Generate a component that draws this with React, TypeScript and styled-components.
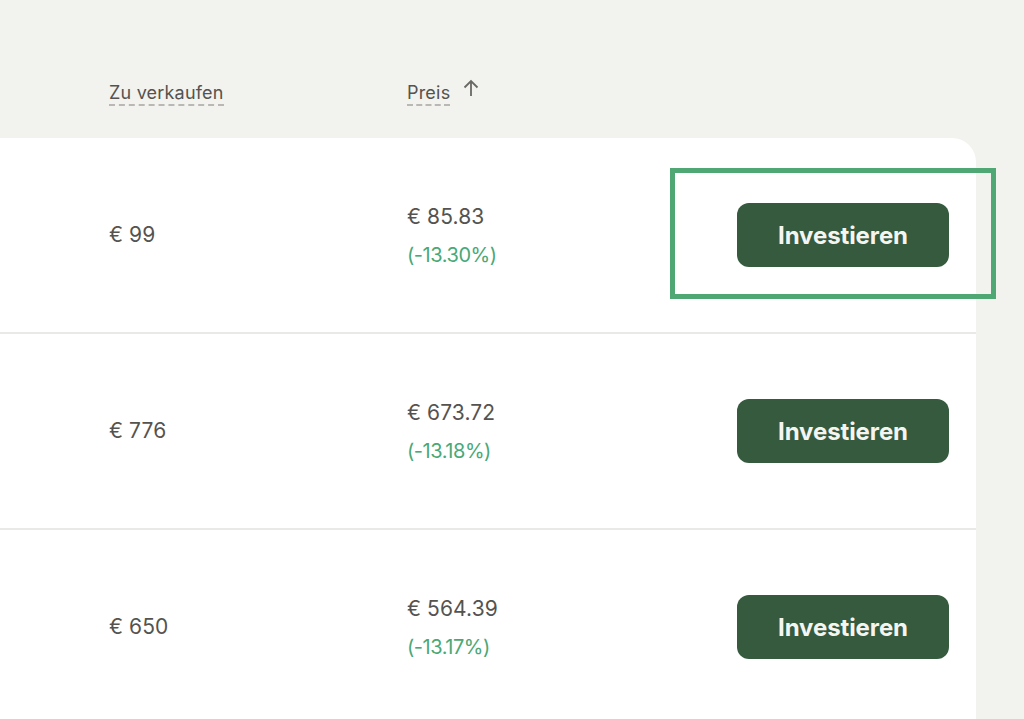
import React from 'react';
import styled, { createGlobalStyle } from 'styled-components';

const GlobalStyle = createGlobalStyle`
    html, body {
        margin: 0;
        padding: 0;
        height: 100%;
        overflow: hidden;
        background: #f2f2ee;
        font-family: Inter, "Liberation Sans", sans-serif;
    }
`;

const Page = styled.div`
    position: relative;
    width: 1024px;
    height: 719px;
    overflow: hidden;
    background: #f2f2ee;
`;

const Columns = styled.div`
    display: grid;
    grid-template-columns: 298px 1fr;
    padding-left: 109px;
`;

const Header = styled(Columns)`
    height: 138px;
    width: 976px;
    box-sizing: border-box;
    align-items: start;
    padding-top: 81px;
`;

const HeaderCell = styled.div`
    display: flex;
    align-items: flex-start;
    gap: 11px;
`;

const HeaderLabel = styled.span`
    font-size: 18px;
    line-height: 23px;
    color: #55534f;
    letter-spacing: 0.2px;
    border-bottom: 2px dashed #b9b8b4;
`;

const SortIcon = styled.svg`
    width: 20px;
    height: 20px;
    margin-top: -3px;
    fill: none;
    stroke: #6a6864;
    stroke-width: 1.8;
`;

const Card = styled.div`
    width: 976px;
    background: #ffffff;
    border-top-right-radius: 24px;
`;

const Row = styled(Columns)`
    height: 196px;
    box-sizing: border-box;
    align-items: center;
    padding-right: 27px;
    grid-template-columns: 298px 1fr auto;
    border-bottom: 2px solid #e9e9e6;
`;

const Amount = styled.div`
    font-size: 21px;
    line-height: 26px;
    color: #55534f;
    letter-spacing: 0.1px;
`;

const PriceCell = styled.div`
    display: flex;
    flex-direction: column;
    gap: 12px;
    padding-top: 1px;
`;

const Discount = styled.div`
    font-size: 20px;
    line-height: 26px;
    color: #4aa876;
    letter-spacing: -0.45px;
`;

const InvestButton = styled.button`
    width: 212px;
    height: 64px;
    border: none;
    border-radius: 12px;
    background: #355a3e;
    color: #f4f5f1;
    font-family: inherit;
    font-size: 24px;
    font-weight: 700;
    letter-spacing: -0.1px;
    cursor: pointer;
`;

const Highlight = styled.div`
    position: absolute;
    left: 670px;
    top: 168px;
    width: 326px;
    height: 131px;
    box-sizing: border-box;
    border: 5px solid #4fa873;
    pointer-events: none;
`;

const rows = [
    { sell: '€ 99', price: '€ 85.83', discount: '(-13.30%)' },
    { sell: '€ 776', price: '€ 673.72', discount: '(-13.18%)' },
    { sell: '€ 650', price: '€ 564.39', discount: '(-13.17%)' },
];

const App = () => (
    <Page>
        <GlobalStyle />
        <Header>
            <HeaderCell>
                <HeaderLabel>Zu verkaufen</HeaderLabel>
            </HeaderCell>
            <HeaderCell>
                <HeaderLabel>Preis</HeaderLabel>
                <SortIcon viewBox="0 0 20 20">
                    <path d="M10 18V3M3.5 9.5L10 3l6.5 6.5" />
                </SortIcon>
            </HeaderCell>
        </Header>
        <Card>
            {rows.map(r => (
                <Row key={r.price}>
                    <Amount>{r.sell}</Amount>
                    <PriceCell>
                        <Amount>{r.price}</Amount>
                        <Discount>{r.discount}</Discount>
                    </PriceCell>
                    <InvestButton>Investieren</InvestButton>
                </Row>
            ))}
        </Card>
        <Highlight />
    </Page>
);

export default App;
